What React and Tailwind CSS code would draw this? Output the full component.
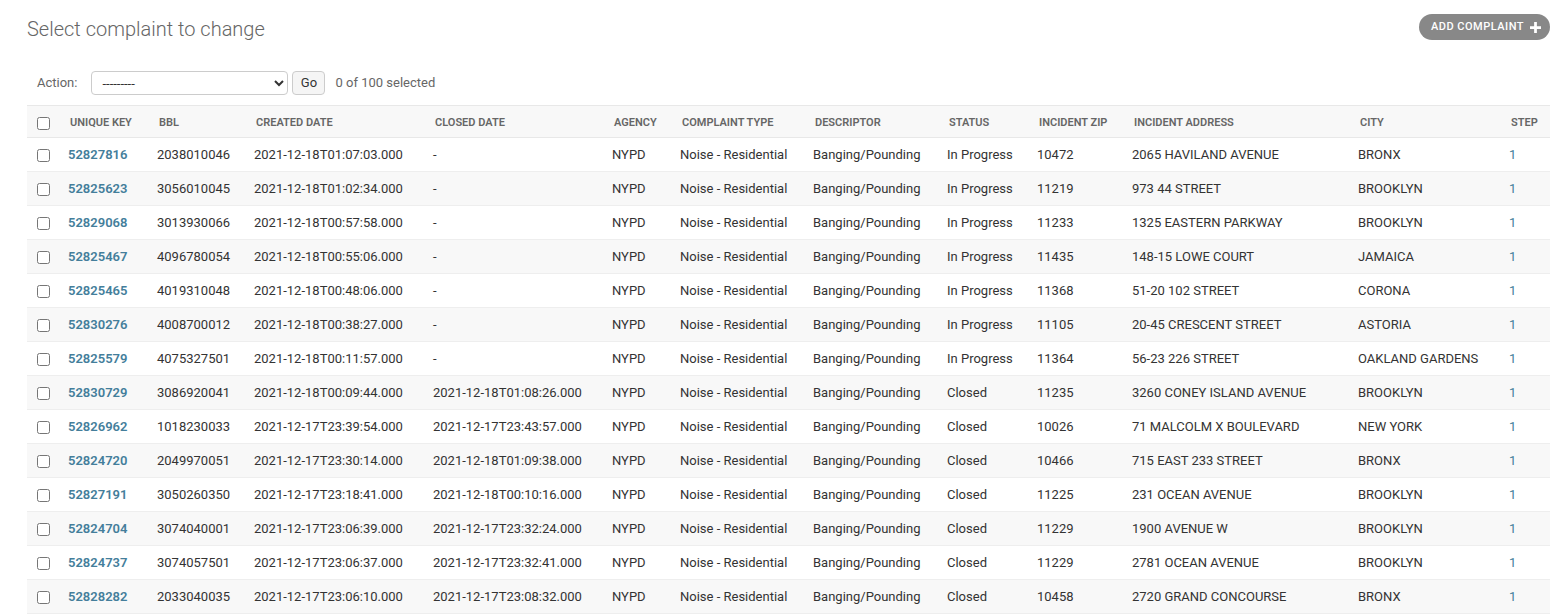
import React from "react";

const rows = [
  ["52827816", "2038010046", "2021-12-18T01:07:03.000", "-", "In Progress", "10472", "2065 HAVILAND AVENUE", "BRONX"],
  ["52825623", "3056010045", "2021-12-18T01:02:34.000", "-", "In Progress", "11219", "973 44 STREET", "BROOKLYN"],
  ["52829068", "3013930066", "2021-12-18T00:57:58.000", "-", "In Progress", "11233", "1325 EASTERN PARKWAY", "BROOKLYN"],
  ["52825467", "4096780054", "2021-12-18T00:55:06.000", "-", "In Progress", "11435", "148-15 LOWE COURT", "JAMAICA"],
  ["52825465", "4019310048", "2021-12-18T00:48:06.000", "-", "In Progress", "11368", "51-20 102 STREET", "CORONA"],
  ["52830276", "4008700012", "2021-12-18T00:38:27.000", "-", "In Progress", "11105", "20-45 CRESCENT STREET", "ASTORIA"],
  ["52825579", "4075327501", "2021-12-18T00:11:57.000", "-", "In Progress", "11364", "56-23 226 STREET", "OAKLAND GARDENS"],
  ["52830729", "3086920041", "2021-12-18T00:09:44.000", "2021-12-18T01:08:26.000", "Closed", "11235", "3260 CONEY ISLAND AVENUE", "BROOKLYN"],
  ["52826962", "1018230033", "2021-12-17T23:39:54.000", "2021-12-17T23:43:57.000", "Closed", "10026", "71 MALCOLM X BOULEVARD", "NEW YORK"],
  ["52824720", "2049970051", "2021-12-17T23:30:14.000", "2021-12-18T01:09:38.000", "Closed", "10466", "715 EAST 233 STREET", "BRONX"],
  ["52827191", "3050260350", "2021-12-17T23:18:41.000", "2021-12-18T00:10:16.000", "Closed", "11225", "231 OCEAN AVENUE", "BROOKLYN"],
  ["52824704", "3074040001", "2021-12-17T23:06:39.000", "2021-12-17T23:32:24.000", "Closed", "11229", "1900 AVENUE W", "BROOKLYN"],
  ["52824737", "3074057501", "2021-12-17T23:06:37.000", "2021-12-17T23:32:41.000", "Closed", "11229", "2781 OCEAN AVENUE", "BROOKLYN"],
  ["52828282", "2033040035", "2021-12-17T23:06:10.000", "2021-12-17T23:08:32.000", "Closed", "10458", "2720 GRAND CONCOURSE", "BRONX"],
];

const columns = [
  { label: "", width: 33 },
  { label: "Unique key", width: 89 },
  { label: "BBL", width: 97 },
  { label: "Created date", width: 179 },
  { label: "Closed date", width: 179 },
  { label: "Agency", width: 68 },
  { label: "Complaint type", width: 133 },
  { label: "Descriptor", width: 134 },
  { label: "Status", width: 90 },
  { label: "Incident zip", width: 95 },
  { label: "Incident address", width: 226 },
  { label: "City", width: 151 },
  { label: "Step", width: 49 },
];

const cell = "border-b border-[#eee] py-[8px] pl-[8px] leading-[17px] text-[13px] whitespace-nowrap";

export default function App() {
  return (
    <div className="w-[1550px] h-[615px] overflow-hidden bg-white font-['Roboto',_sans-serif] text-[#333]">
      {/* Title + object tools */}
      <div className="h-[61px] pt-[14px] pl-[27px] flex items-start justify-between">
        <h1 className="mt-[3px] text-[20px] leading-[24px] font-light text-[#666]">
          Select complaint to change
        </h1>
        <a
          href="#"
          className="h-[26px] flex items-center gap-[6px] pl-[12px] pr-[9px] rounded-full bg-[#888] text-white text-[11px] font-medium uppercase tracking-[0.5px]"
        >
          Add complaint
          <svg width="11" height="11" viewBox="0 0 12 12">
            <path d="M4.5 0h3v4.5H12v3H7.5V12h-3V7.5H0v-3h4.5z" fill="#fff" />
          </svg>
        </a>
      </div>

      {/* Actions */}
      <div className="h-[44px] pl-[37px] flex items-center text-[13px]">
        <label className="text-[#666] mr-[14px]">Action:</label>
        <select className="w-[197px] h-[24px] border border-[#ccc] rounded-[4px] bg-white text-[13px] pl-[6px] text-[#333]">
          <option>---------</option>
        </select>
        <button className="ml-[4px] h-[24px] w-[33px] border border-[#ccc] rounded-[4px] bg-[#f5f5f5] text-[13px] text-[#333]">
          Go
        </button>
        <span className="ml-[10px] text-[#666]">0 of 100 selected</span>
      </div>

      {/* Result list */}
      <table className="ml-[27px] w-[1523px] table-fixed border-separate border-spacing-0 text-left">
        <colgroup>
          {columns.map((c, i) => (
            <col key={i} style={{ width: c.width }} />
          ))}
        </colgroup>
        <thead>
          <tr className="bg-[#f8f8f8]">
            {columns.map((c, i) => (
              <th
                key={i}
                className="border-t border-b border-[#e8e8e8] pt-[9px] pb-[7px] pl-[10px] pr-0 text-[11px] leading-[15px] font-semibold uppercase text-[#666] whitespace-nowrap"
              >
                {i === 0 ? (
                  <input type="checkbox" className="m-0 align-middle w-[13px] h-[13px]" />
                ) : (
                  c.label
                )}
              </th>
            ))}
          </tr>
        </thead>
        <tbody>
          {rows.map((r, idx) => (
            <tr key={r[0]} className={idx % 2 === 0 ? "bg-white" : "bg-[#f8f8f8]"}>
              <td className="border-b border-[#eee] py-[8px] pl-[10px] leading-[17px]">
                <input type="checkbox" className="m-0 align-middle w-[13px] h-[13px]" />
              </td>
              <th className={cell + " font-semibold"}>
                <a href="#" className="text-[#447e9b]">{r[0]}</a>
              </th>
              <td className={cell}>{r[1]}</td>
              <td className={cell}>{r[2]}</td>
              <td className={cell}>{r[3]}</td>
              <td className={cell}>NYPD</td>
              <td className={cell}>Noise - Residential</td>
              <td className={cell}>Banging/Pounding</td>
              <td className={cell}>{r[4]}</td>
              <td className={cell}>{r[5]}</td>
              <td className={cell}>{r[6]}</td>
              <td className={cell}>{r[7]}</td>
              <td className={cell}>
                <a href="#" className="text-[#447e9b]">1</a>
              </td>
            </tr>
          ))}
        </tbody>
      </table>
    </div>
  );
}
